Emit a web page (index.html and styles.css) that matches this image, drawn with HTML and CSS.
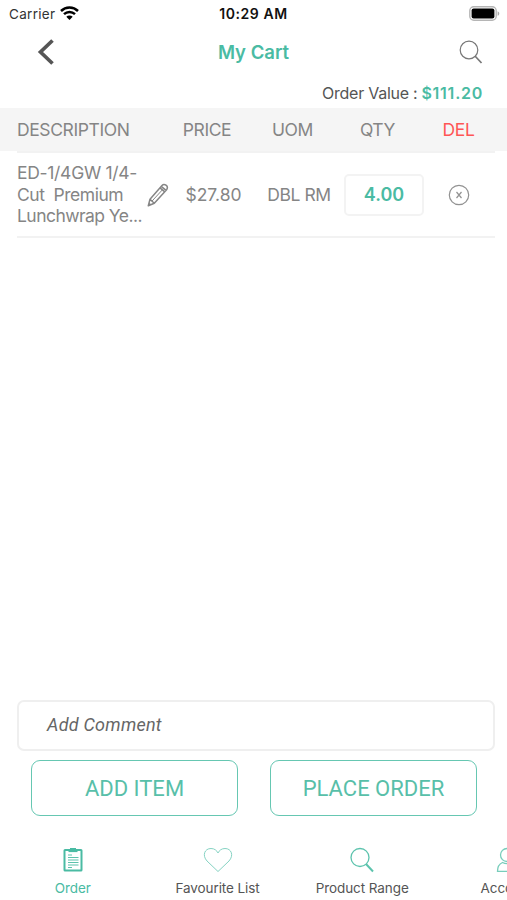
FILE: index.html
```
<!DOCTYPE html>
<html lang="en">
<head>
<meta charset="utf-8">
<title>My Cart</title>
<link rel="stylesheet" href="styles.css">
</head>
<body>
<div class="app">
  <div class="status">
    <div class="carrier"><span>Carrier</span>
      <svg width="19" height="14" viewBox="0 0 19 14" fill="none" stroke="#000" stroke-width="2.5"><path d="M1 5a12.2 12.2 0 0 1 17 0M4 8.2a8 8 0 0 1 11 0"/><path d="M6.3 10.8a4.6 4.6 0 0 1 6.4 0L9.5 14z" fill="#000" stroke="none"/></svg>
    </div>
    <time>10:29 AM</time>
    <svg class="battery" width="31" height="15" viewBox="0 0 31 15"><rect x=".8" y=".8" width="26.4" height="13.4" rx="4" fill="#fff" stroke="#b5b5b5" stroke-width="1.4"/><rect x="2.6" y="2.6" width="22.8" height="9.8" rx="2"/><path d="M28.6 5.2c2.2.8 2.2 3.8 0 4.6z" fill="#aaa"/></svg>
  </div>
  <header class="nav">
    <svg width="18" height="26" viewBox="0 0 18 26" fill="none" stroke="#555" stroke-width="3.7"><path d="M15.5 1.5 3.5 13l12 11.5"/></svg>
    <h1>My Cart</h1>
    <svg width="24" height="24" viewBox="0 0 24 24" fill="none" stroke="#777" stroke-width="1.2"><circle cx="10" cy="10" r="8.8"/><path d="m16 16 6.5 7" stroke-width="1.7"/></svg>
  </header>
  <div class="total"><span class="total-label">Order Value :</span><strong>$111.20</strong></div>
  <div class="grid head">
    <span class="description">DESCRIPTION</span><span class="price">PRICE</span><span class="uom">UOM</span><span class="qty">QTY</span><span class="del">DEL</span>
  </div>
  <div class="grid row">
    <div class="product"><div class="name"><span class="l1">ED-1/4GW 1/4-</span><br><span class="l2">Cut&nbsp; Premium</span><br><span class="l3">Lunchwrap Ye...</span></div>
      <svg width="22" height="24" viewBox="0 0 22 24" fill="none" stroke="#858585" stroke-width="1.5" stroke-linejoin="round"><path d="M1.3 22.7 3 16.3 15 2.500q1.700-2 4-.3t.8 4.200L7.300 20.300zM3 16.300l4.300 4M13 4.800l4.800 4M14.200 3.300l4.900 4.100M1.300 22.700l.6-2.300 1.600 1.500z"/><path d="M5 18.100 15.500 6.700" stroke-width="1"/></svg>
    </div>
    <span class="amount">$27.80</span><span class="unit">DBL RM</span><div class="quantity">4.00</div>
    <svg class="remove" width="22" height="22" viewBox="0 0 22 22" fill="none" stroke="#929292" stroke-width="1.2"><circle cx="11" cy="11" r="9.7"/><path d="m8.500 8 5 6m0-6-5 6"/></svg>
  </div>
  <main class="space"></main>
  <div class="comment">Add Comment</div>
  <div class="actions"><div class="button">ADD ITEM</div><div class="button place">PLACE ORDER</div></div>
  <nav class="tabs">
    <div class="tab active"><svg width="20" height="26" viewBox="0 0 20 26" fill="none" stroke="#4abba3"><rect x="1.5" y="3" width="17" height="20.5" rx=".5" stroke-width="2"/><path d="M5.5 3.600h9" stroke-width="3"/><path d="M7 1.500h6" stroke-width="1"/><path d="M5 8h4M5 10.500h10.500M5 13h10.500M5 15.500h10.500M5 18h10.500M5 20.500h4" stroke-width=".9"/></svg><span class="order">Order</span></div>
    <div class="tab"><svg width="30" height="26" viewBox="0 0 30 26" fill="none" stroke="#86d3c3" stroke-width="1"><path d="M15 24.500 4 14C-1 8.500 1.500 1.500 8 1.500c3.500 0 5.800 2 7 4.500 1.200-2.500 3.500-4.500 7-4.500 6.500 0 9 7 4 12.500z"/></svg><span class="fav">Favourite List</span></div>
    <div class="tab"><svg width="24" height="26" viewBox="0 0 24 26" fill="none" stroke="#5cc3ad" stroke-width="1.3"><circle cx="10" cy="10.500" r="9"/><path d="m16 17 7 7.500" stroke-width="2"/></svg><span class="range">Product Range</span></div>
    <div class="tab"><svg width="30" height="26" viewBox="0 0 30 26" fill="none" stroke="#78cdbb" stroke-width="1.3"><circle cx="15" cy="8" r="6.500"/><path d="M10.500 15.500C7 17 5.500 20 5.500 24.300h19c0-4.300-1.500-7.300-5-8.800-3 1.500-6 1.500-9 0z"/></svg><span class="acc">Account</span></div>
  </nav>
</div>
</body>
</html>
```
FILE: styles.css
```
* { box-sizing: border-box; }
body { margin: 0; background: #fff; overflow: hidden; font-family: Inter, "Liberation Sans", sans-serif; color: #555; }
.app { width: 507px; height: 900px; display: flex; flex-direction: column; overflow: hidden; }
svg { display: block; flex: none; }
span, strong { white-space: nowrap; }
.status { height: 28px; flex: none; display: grid; grid-template-columns: 1fr auto 1fr; align-items: center; padding: 0 7px 0 9px; color: #333; }
.carrier { display: flex; align-items: center; gap: 5px; font-size: 13.5px; letter-spacing: .3px; }
.carrier svg { margin-top: -3px; }
.status time { font-size: 14px; line-height: 16px; letter-spacing: .55px; font-weight: 600; color: #111; margin: -1px 0 0 -2px; }
.battery { justify-self: end; margin-top: -2px; }
.nav { height: 50px; flex: none; display: grid; grid-template-columns: 1fr auto 1fr; align-items: center; padding: 0 24px 0 37px; }
.nav h1 { margin: -2px 0 0 -13px; font-size: 18.5px; line-height: 24px; font-weight: 600; color: #4abba3; }
.nav svg { margin-top: -2px; }
.nav svg:last-child { justify-self: end; }
.total { height: 30px; flex: none; display: flex; justify-content: flex-end; gap: 4px; padding: 4px 24px 0 0; font-size: 16px; line-height: 22px; }
.total-label { letter-spacing: -.25px; }
.total strong { color: #4abba3; font-weight: 600; letter-spacing: .75px; }
.grid { flex: none; display: grid; grid-template-columns: 155px 83px 88px 82px 68px; align-items: center; font-size: 17.5px; color: #858585; }
.head { height: 43px; padding-left: 17px; background: #f5f5f5; grid-template-columns: 148.5px 83px 88px 82px 80px; letter-spacing: -.4px; }
.head > span + span, .row > .amount, .row > .unit { justify-self: center; }
.head .del { color: #f55; }
.row { height: 87px; margin: 0 12px 0 17px; border-top: 2px solid #f2f2f2; border-bottom: 2px solid #f2f2f2; }
.product { display: flex; align-items: center; justify-content: space-between; padding-right: 3px; }
.name { width: 128px; line-height: 21.5px; }
.l1 { letter-spacing: -.3px; }
.l2 { letter-spacing: -.45px; }
.l3 { letter-spacing: -.55px; }
.unit { letter-spacing: -.4px; }
.quantity { justify-self: center; width: 80px; height: 42px; border: 2px solid #f3f3f3; border-radius: 5px; display: flex; align-items: center; justify-content: center; color: #4abba3; font-size: 18px; font-weight: 600; }
.remove { justify-self: center; }
.space { flex: 1; }
.comment { height: 51px; flex: none; margin: 0 12px 9px 17px; padding: 0 28px 2px; border: 2px solid #efefef; border-radius: 7px; display: flex; align-items: center; font: italic 18px Roboto, sans-serif; letter-spacing: .25px; color: #666; }
.actions { height: 56px; flex: none; display: flex; gap: 32px; padding: 0 30px 0 31px; }
.button { width: 207px; border: 1.5px solid #66c7b2; border-radius: 9px; display: flex; align-items: center; justify-content: center; font: 22px Roboto, sans-serif; color: #58bfa9; }
.tabs { height: 84px; flex: none; display: grid; grid-template-columns: repeat(4, 144.7px); padding: 31px 0 0 .5px; font-size: 13.5px; letter-spacing: -.08px; }
.tab { display: flex; flex-direction: column; align-items: center; gap: 6px; line-height: 18px; }
.active { color: #4abba3; }
```
